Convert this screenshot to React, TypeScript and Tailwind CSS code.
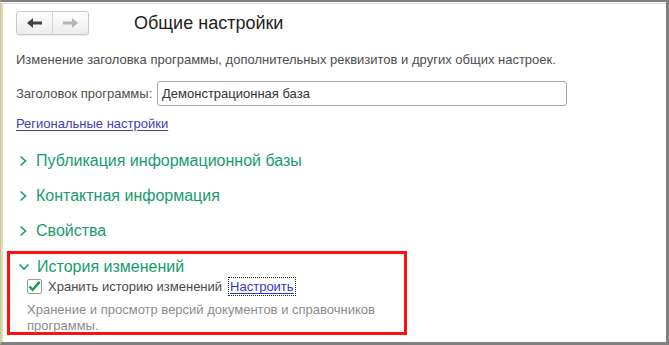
import React from "react";

const green = "#169c6c";

function ChevronRight() {
  return (
    <svg width="10" height="12" viewBox="0 0 10 12" className="shrink-0">
      <path d="M2.5 1.5 L7.5 6 L2.5 10.5" fill="none" stroke={green} strokeWidth="1.6" />
    </svg>
  );
}

function ChevronDown() {
  return (
    <svg width="12" height="10" viewBox="0 0 12 10" className="shrink-0">
      <path d="M1.5 2.5 L6 7 L10.5 2.5" fill="none" stroke={green} strokeWidth="1.6" />
    </svg>
  );
}

function Arrow({ dir, color }: { dir: "left" | "right"; color: string }) {
  return (
    <svg width="15" height="10" viewBox="0 0 15 10" className={dir === "right" ? "rotate-180" : ""}>
      <path d="M0 5 L6 0 L6 3.5 L15 3.5 L15 6.5 L6 6.5 L6 10 Z" fill={color} />
    </svg>
  );
}

function GroupRow({ title }: { title: string }) {
  return (
    <div className="flex h-[35px] items-center gap-[8px] pl-[2px]">
      <ChevronRight />
      <span className="text-[16px]" style={{ color: green }}>
        {title}
      </span>
    </div>
  );
}

export default function App() {
  return (
    <div className="h-[345px] w-[669px] border-t-2 border-r-[3px] border-b-[3px] border-l border-[#808080] border-l-[#c4c4c4] bg-white pt-px font-['Liberation_Sans',Arial,sans-serif] text-[#4d4d4d]">
      <div className="h-full border-t border-l-2 border-t-[#d8d8d8] border-l-[#e6dc9c]">
        <div className="pl-[13px]">
          <div className="flex items-center pt-[7px]">
            <div className="flex h-[24px] w-[73px] overflow-hidden rounded-[3px] border border-[#c8c8c8] bg-gradient-to-b from-white to-[#ececec] shadow-[0_1px_1px_rgba(0,0,0,0.08)]">
              <div className="flex flex-1 items-center justify-center border-r border-[#d4d4d4]">
                <Arrow dir="left" color="#444" />
              </div>
              <div className="flex flex-1 items-center justify-center">
                <Arrow dir="right" color="#b4b4b4" />
              </div>
            </div>
            <h1 className="ml-[45px] text-[18px] leading-[22px] text-[#222]">Общие настройки</h1>
          </div>

          <p className="mt-[17px] text-[13px] leading-[15px]">
            Изменение заголовка программы, дополнительных реквизитов и других общих настроек.
          </p>

          <div className="mt-[14px] flex items-center gap-[7px]">
            <span className="w-[134px] shrink-0 whitespace-nowrap text-[13px]">Заголовок программы:</span>
            <div className="flex h-[25px] w-[410px] items-center rounded-[3px] border border-[#a8a8a8] px-[4px] text-[13px] text-[#333]">
              Демонстрационная база
            </div>
          </div>

          <div className="mt-[10px] text-[13px] leading-[16px]">
            <span className="text-[#4040b0] underline underline-offset-2">Региональные настройки</span>
          </div>

          <div className="mt-[11px]">
            <GroupRow title="Публикация информационной базы" />
            <GroupRow title="Контактная информация" />
            <GroupRow title="Свойства" />
          </div>
        </div>

        <div className="mt-[3px] ml-[4px] h-[84px] w-[400px] border-[3px] border-[#ff1010] pl-[8px]">
          <div className="flex h-[24px] items-center gap-[7px] pt-[2px]">
            <ChevronDown />
            <span className="text-[16px]" style={{ color: green }}>
              История изменений
            </span>
          </div>
          <div className="-mt-[1px] flex items-center pl-[9px]">
            <div className="flex h-[15px] w-[15px] items-center justify-center rounded-[2px] border border-[#9a9a9a] bg-white">
              <svg width="14" height="13" viewBox="0 0 14 13">
                <path d="M1.5 6.5 L5 10 L12.5 1.5" fill="none" stroke="#14a03a" strokeWidth="2.6" />
              </svg>
            </div>
            <span className="ml-[6px] text-[13px] text-[#4a4a4a]">Хранить историю изменений</span>
            <span className="ml-[6px] border border-dotted border-[#222] px-[1px] py-[1px] text-[13px] leading-[15px] text-[#3535d6] underline underline-offset-2">
              Настроить
            </span>
          </div>
          <p className="mt-[5px] w-[360px] pl-[9px] text-[13px] leading-[16px] text-[#8c8c8c]">
            Хранение и просмотр версий документов и справочников программы.
          </p>
        </div>
      </div>
    </div>
  );
}
